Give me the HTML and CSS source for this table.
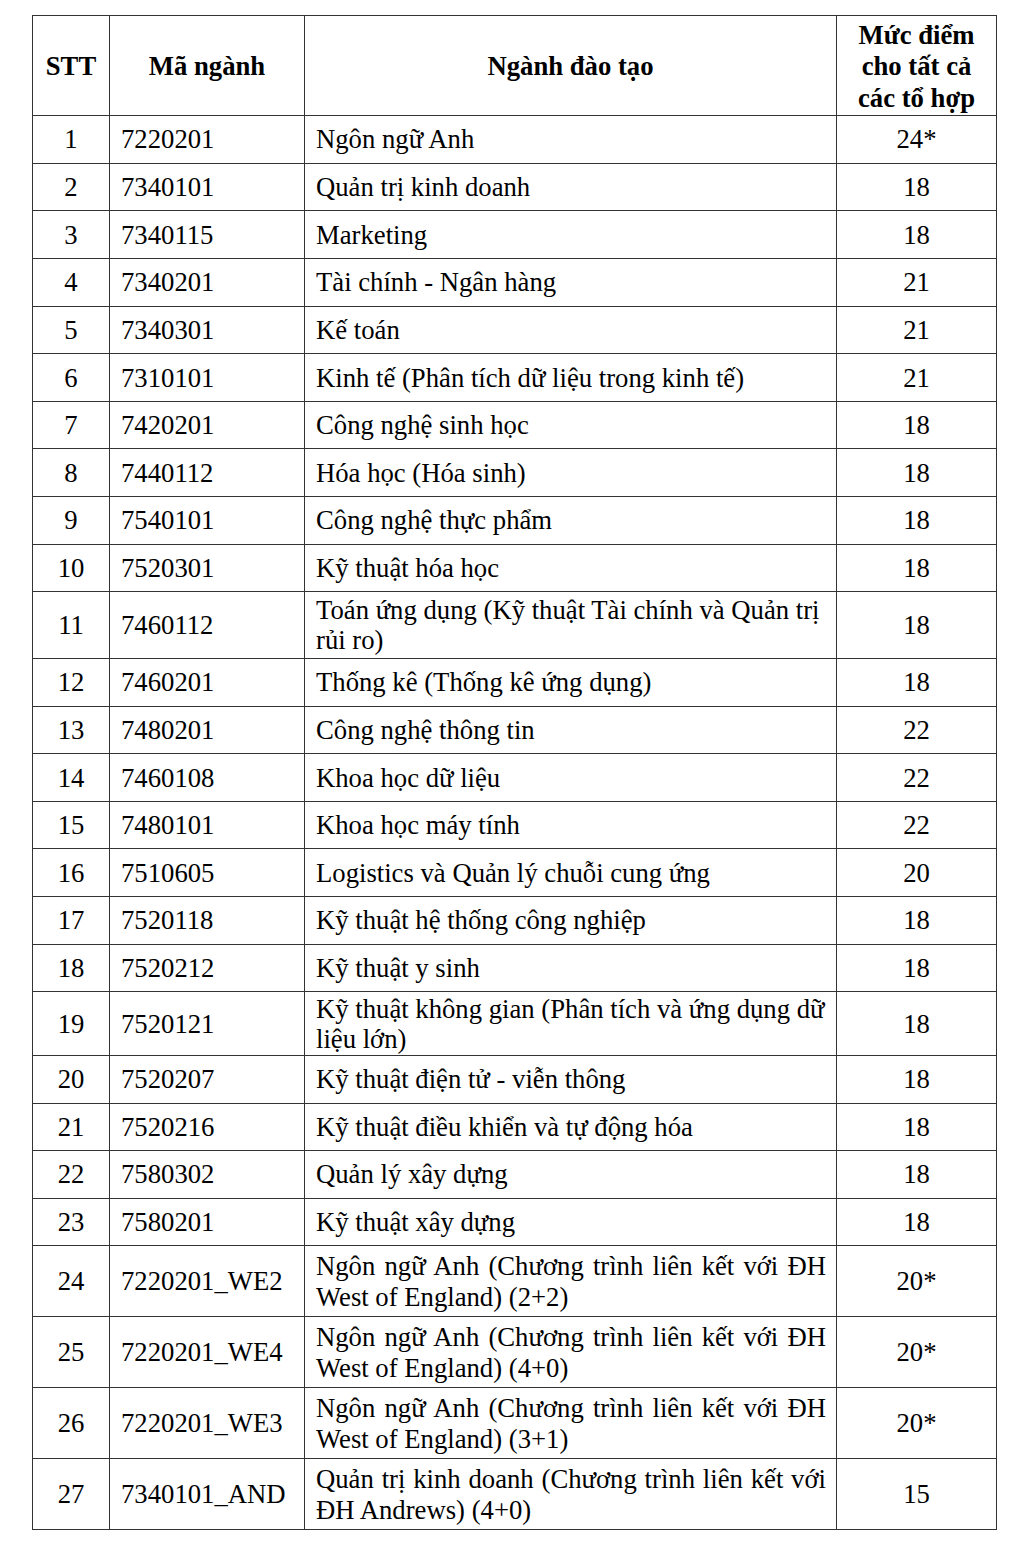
FILE: index.html
```html
<!DOCTYPE html>
<html lang="vi">
<head>
<meta charset="utf-8">
<title>Mức điểm</title>
<link rel="stylesheet" href="styles.css">
</head>
<body>
<table class="scores">
  <colgroup>
    <col class="c-stt">
    <col class="c-code">
    <col class="c-name">
    <col class="c-score">
  </colgroup>
  <thead>
    <tr class="r-head">
      <th>STT</th>
      <th>Mã ngành</th>
      <th>Ngành đào tạo</th>
      <th class="h-score">Mức điểm cho tất cả các tổ hợp</th>
    </tr>
  </thead>
  <tbody>
    <tr><td class="num">1</td><td class="code">7220201</td><td class="name">Ngôn ngữ Anh</td><td class="num">24*</td></tr>
    <tr><td class="num">2</td><td class="code">7340101</td><td class="name">Quản trị kinh doanh</td><td class="num">18</td></tr>
    <tr><td class="num">3</td><td class="code">7340115</td><td class="name">Marketing</td><td class="num">18</td></tr>
    <tr><td class="num">4</td><td class="code">7340201</td><td class="name">Tài chính - Ngân hàng</td><td class="num">21</td></tr>
    <tr><td class="num">5</td><td class="code">7340301</td><td class="name">Kế toán</td><td class="num">21</td></tr>
    <tr><td class="num">6</td><td class="code">7310101</td><td class="name">Kinh tế (Phân tích dữ liệu trong kinh tế)</td><td class="num">21</td></tr>
    <tr><td class="num">7</td><td class="code">7420201</td><td class="name">Công nghệ sinh học</td><td class="num">18</td></tr>
    <tr><td class="num">8</td><td class="code">7440112</td><td class="name">Hóa học (Hóa sinh)</td><td class="num">18</td></tr>
    <tr><td class="num">9</td><td class="code">7540101</td><td class="name">Công nghệ thực phẩm</td><td class="num">18</td></tr>
    <tr><td class="num">10</td><td class="code">7520301</td><td class="name">Kỹ thuật hóa học</td><td class="num">18</td></tr>
    <tr class="r-two r-two-a"><td class="num">11</td><td class="code">7460112</td><td class="name">Toán ứng dụng (Kỹ thuật Tài chính và Quản trị rủi ro)</td><td class="num">18</td></tr>
    <tr><td class="num">12</td><td class="code">7460201</td><td class="name">Thống kê (Thống kê ứng dụng)</td><td class="num">18</td></tr>
    <tr><td class="num">13</td><td class="code">7480201</td><td class="name">Công nghệ thông tin</td><td class="num">22</td></tr>
    <tr><td class="num">14</td><td class="code">7460108</td><td class="name">Khoa học dữ liệu</td><td class="num">22</td></tr>
    <tr><td class="num">15</td><td class="code">7480101</td><td class="name">Khoa học máy tính</td><td class="num">22</td></tr>
    <tr><td class="num">16</td><td class="code">7510605</td><td class="name">Logistics và Quản lý chuỗi cung ứng</td><td class="num">20</td></tr>
    <tr><td class="num">17</td><td class="code">7520118</td><td class="name">Kỹ thuật hệ thống công nghiệp</td><td class="num">18</td></tr>
    <tr><td class="num">18</td><td class="code">7520212</td><td class="name">Kỹ thuật y sinh</td><td class="num">18</td></tr>
    <tr class="r-two"><td class="num">19</td><td class="code">7520121</td><td class="name">Kỹ thuật không gian (Phân tích và ứng dụng dữ liệu lớn)</td><td class="num">18</td></tr>
    <tr><td class="num">20</td><td class="code">7520207</td><td class="name">Kỹ thuật điện tử - viễn thông</td><td class="num">18</td></tr>
    <tr><td class="num">21</td><td class="code">7520216</td><td class="name">Kỹ thuật điều khiển và tự động hóa</td><td class="num">18</td></tr>
    <tr><td class="num">22</td><td class="code">7580302</td><td class="name">Quản lý xây dựng</td><td class="num">18</td></tr>
    <tr><td class="num">23</td><td class="code">7580201</td><td class="name">Kỹ thuật xây dựng</td><td class="num">18</td></tr>
    <tr class="r-tall"><td class="num">24</td><td class="code">7220201_WE2</td><td class="name just">Ngôn ngữ Anh (Chương trình liên kết với ĐH West of England) (2+2)</td><td class="num">20*</td></tr>
    <tr class="r-tall"><td class="num">25</td><td class="code">7220201_WE4</td><td class="name just">Ngôn ngữ Anh (Chương trình liên kết với ĐH West of England) (4+0)</td><td class="num">20*</td></tr>
    <tr class="r-tall"><td class="num">26</td><td class="code">7220201_WE3</td><td class="name just">Ngôn ngữ Anh (Chương trình liên kết với ĐH West of England) (3+1)</td><td class="num">20*</td></tr>
    <tr class="r-tall"><td class="num">27</td><td class="code">7340101_AND</td><td class="name just">Quản trị kinh doanh (Chương trình liên kết với ĐH Andrews) (4+0)</td><td class="num">15</td></tr>
  </tbody>
</table>
</body>
</html>
```

FILE: styles.css
```css
html, body {
  margin: 0;
  padding: 0;
  background: #ffffff;
}

body {
  font-family: "Liberation Serif", "Times New Roman", serif;
  color: #000000;
  font-size: 26.7px;
}

.scores {
  margin: 15px 0 0 32px;
  width: 964px;
  table-layout: fixed;
  border-collapse: collapse;
  border-top: 1px solid #7a7a7a;
  border-right: 1px solid #6f6f6f;
  border-bottom: 1px solid #555555;
  border-left: 1px solid #333333;
}

.c-stt { width: 77px; }
.c-code { width: 195px; }
.c-name { width: 532px; }
.c-score { width: 160px; }

.scores th,
.scores td {
  border: 1px solid #333333;
  padding: 0 10px 0 11px;
  vertical-align: middle;
  line-height: 30px;
}

.scores th {
  font-weight: bold;
  text-align: center;
  padding: 0 4px;
}

.scores th.h-score {
  line-height: 31.5px;
  padding: 3px 14px 0;
}

.r-head { height: 100px; }
.scores tbody tr { height: 47.65px; }
.scores tbody tr.r-two { height: 63.5px; }
.scores tbody tr.r-two-a { height: 66.5px; }
.scores tbody tr.r-tall { height: 71px; }

.scores td.num {
  text-align: center;
  padding: 0 4px;
}

.scores td.code {
  text-align: left;
}

.scores td.name {
  text-align: left;
}

.scores td.just {
  text-align: justify;
  line-height: 31px;
  padding-top: 2px;
}
```
